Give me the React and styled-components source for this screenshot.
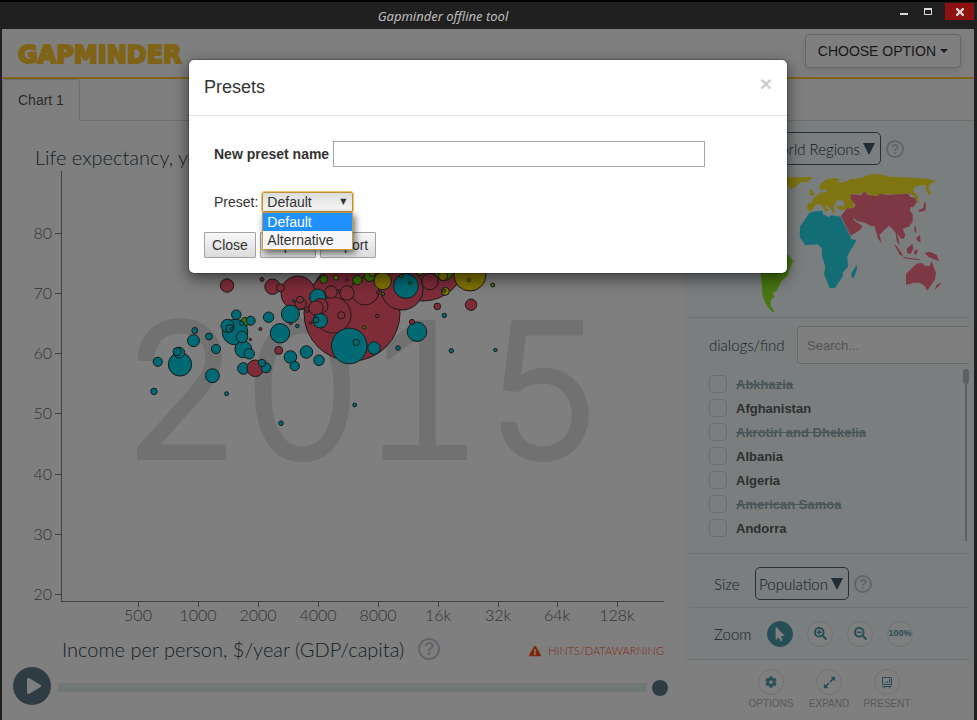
import React from "react";
import styled, { createGlobalStyle } from "styled-components";
import {
  FaMousePointer,
  FaSearchPlus,
  FaSearchMinus,
  FaCog,
  FaExpandAlt,
  FaExclamationTriangle,
  FaPlay,
  FaTimes,
} from "react-icons/fa";

const light = '"Lato", "Open Sans", sans-serif';
const ui = '"Liberation Sans", Arial, sans-serif';

const GlobalStyle = createGlobalStyle`
  *, *::before, *::after { box-sizing: border-box; }
  html, body, #root { height: 100%; margin: 0; }
  body { background: #202020; font-family: ${ui}; font-size: 14px; color: #333; overflow: hidden; }
  button, input, select { font: inherit; color: inherit; }
  button { cursor: pointer; }
`;

const Window = styled.div`
  display: flex;
  flex-direction: column;
  min-height: 100vh;
  border-top: 2px solid #000;
  background: #202020;
`;

const TitleBar = styled.header`
  display: grid;
  grid-template-columns: 1fr auto 1fr;
  height: 27px;
  padding-right: 3px;
`;

const WindowTitle = styled.h1`
  grid-column: 2;
  margin: 0;
  padding-right: 88px;
  font: italic 13px/29px "Noto Sans", sans-serif;
  color: #bebebe;
`;

const WindowButtons = styled.div`
  display: flex;
  justify-content: flex-end;
  align-items: flex-start;
`;

const WindowButton = styled.button`
  display: grid;
  place-items: center;
  width: ${(p) => (p.$danger ? 29 : 24)}px;
  height: 17px;
  margin: 1px ${(p) => (p.$last ? 5 : 0)}px 0 0;
  padding: 0;
  border: 0;
  background: ${(p) => (p.$danger ? "#8f1010" : "transparent")};
  color: #d8d8d8;
`;

const Page = styled.div`
  position: relative;
  flex: 1;
  display: flex;
  flex-direction: column;
  margin: 0 3px 0 2px;
  background: #fff;
`;

const AppHeader = styled.div`
  display: flex;
  justify-content: space-between;
  align-items: flex-start;
  height: 50px;
  padding: 5px 13px 0 15px;
  border-bottom: 2px solid #ffc82f;
`;

const LogoLink = styled.a`
  margin-top: 8px;
  line-height: 0;
`;

const OptionButton = styled.button`
  display: flex;
  align-items: center;
  gap: 4px;
  height: 34px;
  padding: 0 12px;
  border: 1px solid #ccc;
  border-radius: 4px;
  background: #fff;
  box-shadow: 0 3px 6px rgba(0, 0, 0, 0.12);
  &::after {
    content: "";
    border: 4px solid transparent;
    border-top-color: #333;
    border-bottom: 0;
  }
`;

const Tabs = styled.nav`
  display: flex;
  height: 42px;
  border-bottom: 1px solid #ddd;
`;

const Tab = styled.a`
  height: 42px;
  padding: 0 15px;
  border: 1px solid #ddd;
  border-bottom-color: #fff;
  border-radius: 4px 4px 0 0;
  line-height: 40px;
  color: #555;
  background: #fff;
  text-decoration: none;
`;

const Content = styled.div`
  flex: 1;
  display: flex;
`;

const ChartColumn = styled.main`
  flex: 1;
  min-width: 0;
  display: flex;
  flex-direction: column;
`;

const AxisTitle = styled.h2`
  margin: 0;
  font: 300 20px/24px ${light};
  color: #2c4352;
  white-space: nowrap;
`;

const YTitleRow = styled.div`
  height: 49px;
  padding: 24px 0 0 33px;
`;

const Plot = styled.svg`
  display: block;
  width: 100%;
  height: auto;
`;

const XTitleRow = styled.div`
  display: flex;
  align-items: center;
  gap: 14px;
  height: 40px;
  padding: 6px 20px 0 60px;
`;

const Help = styled.button`
  display: grid;
  place-items: center;
  flex: none;
  width: ${(p) => p.$size}px;
  height: ${(p) => p.$size}px;
  padding: 0;
  border: 2px solid #c3c9d2;
  border-radius: 50%;
  background: transparent;
  font: 700 ${(p) => p.$size - 4}px/1 ${ui};
  color: #c3c9d2;
`;

const Hint = styled.button`
  display: flex;
  align-items: center;
  gap: 7px;
  margin-left: auto;
  padding: 4px 0 0;
  border: 0;
  background: transparent;
  font: 300 11px/14px ${light};
  color: #ff4e14;
`;

const Player = styled.div`
  display: flex;
  align-items: center;
  gap: 7px;
  padding: 1px 16px 0 11px;
`;

const PlayButton = styled.button`
  display: grid;
  place-items: center;
  flex: none;
  width: 38px;
  height: 38px;
  padding: 0 0 0 3px;
  border: 0;
  border-radius: 50%;
  background: #5f7889;
  color: #fff;
`;

const TimeSlider = styled.input`
  flex: 1;
  min-width: 0;
  height: 16px;
  margin: 3px 0 0;
  appearance: none;
  background: linear-gradient(#e3edee, #e3edee) left center / calc(100% - 21px) 9px no-repeat;
  border-radius: 5px;
  &::-webkit-slider-thumb {
    appearance: none;
    width: 16px;
    height: 16px;
    border-radius: 50%;
    background: #5f7889;
  }
`;

const SideColumn = styled.aside`
  flex: none;
  width: 290px;
`;

const Panel = styled.div`
  padding: 0 5px 2px;
  background: #f4fdff;
`;

const Section = styled.section`
  border-bottom: 1px solid #dae4e8;
  overflow: hidden;
`;

const ColorSection = styled(Section)`
  height: 197px;
`;

const FieldRow = styled.div`
  display: flex;
  align-items: center;
  gap: 5px;
  height: ${(p) => p.$height}px;
  padding: ${(p) => p.$top || 0}px 0 0 ${(p) => p.$indent}px;
`;

const Label = styled.span`
  min-width: ${(p) => p.$width || 0}px;
  font: 300 15px/20px ${light};
  color: #2f4656;
`;

const PickButton = styled.button`
  display: flex;
  align-items: center;
  justify-content: flex-end;
  gap: 3px;
  width: ${(p) => p.$width}px;
  height: 33px;
  padding: 0 5px;
  border: 1px solid #4a6270;
  border-radius: 5px;
  background: transparent;
  font: 300 15px/20px ${light};
  color: #213848;
  white-space: nowrap;
  &::after {
    content: "";
    border: 6px solid transparent;
    border-top: 12px solid #435a69;
    border-bottom: 0;
  }
`;

const WorldMap = styled.svg`
  display: block;
  width: 100%;
  height: auto;
`;

const FindHead = styled.div`
  display: flex;
  align-items: center;
  justify-content: space-between;
  padding: 8px 0 5px 20px;
`;

const Search = styled.input`
  width: 172px;
  height: 38px;
  padding: 0 9px;
  border: 1px solid #d0d0d0;
  border-right: 0;
  border-radius: 4px 0 0 4px;
  background: #fff;
  font-size: 13px;
  &::placeholder { color: #a8a8a8; }
`;

const FindBody = styled.div`
  display: flex;
  justify-content: space-between;
  height: 184px;
`;

const Countries = styled.ul`
  margin: 0;
  padding: 3px 0 0 20px;
  list-style: none;
`;

const Country = styled.label`
  display: flex;
  align-items: center;
  gap: 9px;
  height: 24px;
  font-weight: 700;
  font-size: 13px;
  color: ${(p) => (p.$off ? "#93abb0" : "#5c5c5c")};
  text-decoration: ${(p) => (p.$off ? "line-through" : "none")};
`;

const Check = styled.input`
  width: 18px;
  height: 18px;
  margin: 0;
  appearance: none;
  border: 1px solid #d4dcde;
  border-radius: 4px;
`;

const ScrollTrack = styled.div`
  width: 6px;
  height: 172px;
  background: linear-gradient(#b6c1ca, #b6c1ca) center / 2px 100% no-repeat;
  &::before {
    content: "";
    display: block;
    height: 15px;
    border-radius: 3px;
    background: #b6c1ca;
  }
`;

const RoundButton = styled.button`
  display: grid;
  place-items: center;
  width: 26px;
  height: 26px;
  padding: 0;
  border: 1px solid ${(p) => (p.$active ? "#4d9caf" : "#d5e4e7")};
  border-radius: 50%;
  background: ${(p) => (p.$active ? "#4d9caf" : "#fff")};
  color: ${(p) => (p.$active ? "#fff" : "#4d9caf")};
  font: 700 9px/1 ${ui};
`;

const RoundRow = styled.div`
  display: flex;
  gap: 14px;
`;

const Actions = styled.div`
  display: flex;
  padding: 7px 0 0 58px;
`;

const Action = styled.label`
  display: flex;
  flex-direction: column;
  align-items: center;
  gap: 1px;
  width: 58px;
  font-size: 10px;
  line-height: 16px;
  color: #a9b5b7;
`;

const Backdrop = styled.div`
  position: absolute;
  inset: 0;
  padding: 30px 16px;
  background: rgba(0, 0, 0, 0.5);
`;

const Dialog = styled.section`
  max-width: 600px;
  margin: 0 auto;
  border: 1px solid rgba(0, 0, 0, 0.2);
  border-radius: 6px;
  background: #fff;
  background-clip: padding-box;
  box-shadow: 0 5px 15px rgba(0, 0, 0, 0.5);
`;

const DialogHead = styled.header`
  display: flex;
  justify-content: space-between;
  align-items: flex-start;
  height: 56px;
  padding: 15px;
  border-bottom: 1px solid #e5e5e5;
`;

const DialogTitle = styled.h3`
  margin: 0;
  font-size: 18px;
  font-weight: 500;
  line-height: 25px;
`;

const DialogClose = styled.button`
  padding: 0;
  border: 0;
  background: transparent;
  font-weight: 700;
  font-size: 21px;
  line-height: 18px;
  color: #ccc;
`;

const DialogBody = styled.div`
  padding: 25px 15px 15px;
`;

const NameRow = styled.div`
  display: flex;
  align-items: center;
  gap: 4px;
  padding: 0 67px 25px 10px;
  label { font-weight: 700; }
`;

const NameInput = styled.input`
  flex: 1;
  min-width: 0;
  height: 26px;
  border: 1px solid #a6a6a6;
  background: #fff;
`;

const PresetRow = styled.div`
  display: flex;
  align-items: center;
  gap: 4px;
  padding: 0 0 20px 10px;
`;

const SelectWrap = styled.div`
  position: relative;
  width: 91px;
  &::after {
    content: "▼";
    position: absolute;
    right: 7px;
    top: 1px;
    font: 8px/18px "DejaVu Sans", sans-serif;
    color: #333;
    pointer-events: none;
  }
`;

const Select = styled.select`
  display: block;
  width: 100%;
  height: 20px;
  padding: 0 4px;
  appearance: none;
  border: 1px solid #c1903c;
  border-radius: 2px;
  outline: 1px solid #efc468;
  background: linear-gradient(#dcdcdc, #f8f8f8);
`;

const Options = styled.ul`
  position: absolute;
  z-index: 1;
  top: 100%;
  left: 0;
  right: 0;
  margin: 0;
  padding: 0;
  list-style: none;
  border: 1px solid #c9983f;
  background: #f7f7f7;
  box-shadow: 2px 3px 7px rgba(0, 0, 0, 0.6);
`;

const Option = styled.li`
  padding-left: 4px;
  line-height: 18px;
  color: ${(p) => (p.$selected ? "#fff" : "#333")};
  background: ${(p) => (p.$selected ? "#1e90ff" : "transparent")};
`;

const DialogButtons = styled.div`
  display: flex;
  gap: 4px;
`;

const PushButton = styled.button`
  min-width: ${(p) => (p.$wide ? 56 : 52)}px;
  height: 26px;
  padding: 0 6px;
  border: 1px solid #a3a3a3;
  border-radius: 1px;
  background: linear-gradient(#f7f7f7, #dcdcdc);
`;

const C = { t: "#00d5e9", r: "#ff5872", g: "#7feb00", y: "#ffe700" };

const bubbles = [
  [423, 258, 43, "r"], [350, 300, 39, "r"], [352, 313, 48, "r"], [402, 289, 21, "r"], [298, 293, 17, "r"],
  [365, 291, 14, "r"], [333, 315, 18, "r"], [347, 293, 7.2, "r"], [331, 292, 6.2, "r"],
  [444, 271, 9.5, "g"], [420, 271, 4.5, "g"], [430, 281.5, 8.2, "r"], [443, 276, 4.5, "y"], [470, 275, 16, "y"],
  [469, 280, 1.6, "y"], [445.3, 291.3, 4, "y"], [444, 290.6, 1.6, "g"], [406, 286, 12.4, "t"], [401, 276, 1.6, "g"],
  [410, 283, 1.4, "g"], [369.7, 276, 5.5, "g"], [372.3, 273.5, 3, "y"], [382.7, 281, 8.7, "y"], [383, 294, 1.6, "g"],
  [378, 292.4, 1.5, "r"], [357.3, 280, 4.7, "g"], [336, 277.5, 2.7, "y"], [323.7, 279.3, 4, "g"], [346.7, 280.4, 1.3, "r"],
  [317.7, 297, 8, "t"], [320.5, 306, 7.5, "r"], [316, 308, 7.2, "r"], [300.6, 303.5, 5.5, "r"], [300, 299.7, 3.4, "r"],
  [320.3, 320.8, 7.2, "t"], [316, 320, 2.8, "t"], [341.2, 315.3, 3.6, "r"], [377.3, 316, 1.8, "r"], [364.3, 327.3, 1.7, "g"],
  [307.3, 311.3, 1.3, "r"], [310.7, 323, 1.3, "r"], [339.3, 291, 1.5, "r"], [349.3, 346, 17.8, "t"], [356.3, 342.4, 3.2, "t"],
  [374, 348, 6.3, "t"], [398, 348, 2.3, "t"], [417, 331.8, 9.7, "t"], [412, 322, 2.6, "r"], [437.3, 306.4, 3.3, "r"],
  [444.3, 315.4, 2.2, "t"], [471, 304.7, 5.7, "r"], [451.3, 350.7, 2.2, "t"], [495.4, 350, 1.7, "t"], [492.7, 285, 2, "g"],
  [227, 285.5, 6.7, "r"], [262, 279.5, 2, "r"], [272.5, 286.7, 7.7, "r"], [280.5, 287.7, 4, "r"], [245, 322, 4.5, "g"],
  [235, 332, 12.8, "t"], [227.5, 325.8, 6.5, "t"], [229.6, 328.5, 3.8, "t"], [231.8, 329, 1.5, "t"], [250.7, 320.7, 4.5, "t"],
  [241.6, 323.3, 2.2, "t"], [236.3, 314.7, 4.8, "t"], [243.3, 349.3, 8.4, "t"], [242, 337, 5.8, "t"], [249.3, 353.8, 5.2, "t"],
  [194.8, 330.5, 3, "t"], [209, 336.5, 3.4, "t"], [193.5, 340.7, 6, "t"], [216, 349, 4.6, "t"], [250.4, 339.5, 1.2, "r"],
  [260.4, 329, 1.5, "r"], [268.6, 317.2, 5.2, "t"], [290.4, 314, 9, "t"], [280, 333.3, 9.7, "t"], [293.5, 301, 1.2, "t"],
  [180, 364.4, 11.7, "t"], [179.2, 352.6, 5.5, "t"], [177, 351.6, 4, "t"], [157.8, 361.8, 4.6, "t"], [154, 391.4, 3.2, "t"],
  [212.4, 375.7, 7, "t"], [226.6, 393.7, 2, "t"], [243.4, 368.5, 5.8, "t"], [255.3, 368.3, 8.3, "r"], [266, 367.8, 5, "t"],
  [262, 363, 3.7, "t"], [278.7, 350.4, 4, "r"], [290.4, 357, 6.3, "t"], [294.7, 366, 4.7, "t"], [281, 423.2, 2.3, "t"],
  [297.3, 326, 1.8, "t"], [290.6, 323.5, 1.2, "r"], [306.4, 352, 6.2, "t"], [319, 360.3, 5.3, "t"], [354.7, 405, 1.9, "t"],
];

const yTicks = [[80, 233], [70, 293], [60, 353], [50, 413], [40, 474], [30, 534], [20, 594]];
const xTicks = [
  ["500", 138], ["1000", 198], ["2000", 258], ["4000", 318], ["8000", 378],
  ["16k", 438], ["32k", 498], ["64k", 557], ["128k", 617],
];

const YearText = styled.text`
  font: 300 187px "Inter", sans-serif;
  font-variant-numeric: tabular-nums;
  fill: #e2e2e2;
  stroke: #e2e2e2;
  stroke-width: 4px;
  stroke-linejoin: round;
`;

function BubbleChart() {
  return (
    <Plot viewBox="2 170 682 456" role="img" aria-label="Bubble chart, 2015">
      <YearText x="363" y="458" textAnchor="middle">2015</YearText>
      <g stroke="#808080" strokeWidth="1" fill="none" shapeRendering="crispEdges">
        <path d="M61.500 171V601.500H664" />
        {yTicks.map(([v, y]) => <path key={v} d={`M55 ${y + 0.5}H61`} />)}
        {xTicks.map(([v, x]) => <path key={v} d={`M${x + 0.5} 602V607`} />)}
      </g>
      <g fontFamily="Lato" fontWeight="300" fontSize="16" fill="#666">
        {yTicks.map(([v, y]) => <text key={v} x="52" y={y + 6} textAnchor="end">{v}</text>)}
        {xTicks.map(([v, x]) => <text key={v} x={x} y="621" textAnchor="middle">{v}</text>)}
      </g>
      <g stroke="#333" strokeWidth="1">
        {bubbles.map(([x, y, r, c], i) => <circle key={i} cx={x} cy={y} r={r} fill={C[c]} />)}
      </g>
    </Plot>
  );
}

function RegionsMap() {
  return (
    <WorldMap viewBox="27 150 840 435" role="img" aria-label="World regions">
      <g opacity="0.85">
        <g fill={C.y}>
          <path d="M300 172L398 171L380 188L365 185L352 195L342 205L330 208L326 195L300 185Z" />
          <path d="M382 272L382 252L398 246L397 238L412 225L424 217L440 217L436 208L428 211L418 206L420 193L440 178L462 174L482 178L470 184L480 188L505 182L512 177L545 174L570 163L600 163L630 170L700 173L740 176L771 184L752 190L745 200L752 222L745 226L737 206L737 195L720 196L702 203L700 215L712 226L716 248L708 245L704 228L685 220L660 224L600 222L590 230L560 222L552 214L545 221L514 222L512 232L520 245L522 262L505 268L480 270L468 262L478 258L495 258L490 242L470 240L465 255L460 262L465 278L460 280L450 265L440 255L436 258L445 272L437 275L425 255L410 253L402 262L395 272Z" />
          <path d="M385 225L392 220L388 212L395 206L400 218L405 222L395 228Z" />
        </g>
        <g fill={C.t}>
          <path d="M388 279L404 274L427 272L429 283L447 292L453 286L482 290L512 352L512 357L530 360L502 408L504 440L488 458L489 468L466 503L449 505L432 462L436 440L425 406L426 385L412 373L376 376L359 350L360 320Z" />
          <path d="M514 460L530 435L531 447L522 472L515 474Z" />
        </g>
        <g fill={C.r}>
          <path d="M483 288L500 266L520 264L527 256L512 236L512 223L545 225L552 213L562 224L590 229L600 221L625 225L685 221L690 230L705 233L710 247L700 262L692 260L690 272L698 283L698 305L686 320L668 326L676 345L672 357L662 355L650 340L655 355L660 378L650 362L647 340L640 330L627 317L606 337L598 345L606 370L595 358L583 318L570 317L555 308L530 303L519 290L523 302L548 318L540 330L512 347Z" />
          <path d="M642 372L652 380L670 408L660 405Z" />
          <path d="M670 411L720 418L718 421L670 415Z" />
          <path d="M680 386L697 371L700 385L692 402L681 398Z" />
          <path d="M703 392L714 388L710 402L703 404Z" />
          <path d="M702 320L706 318L710 335L705 340ZM708 355L720 345L722 368L712 362Z" />
          <path d="M733 398L750 395L770 405L777 423L760 417L745 410Z" />
          <path d="M732 246L738 252L736 272L718 276L716 270L730 264Z" />
          <path d="M678 462L700 440L712 430L728 430L734 437L748 438L755 424L768 460L764 480L742 512L734 498L720 488L702 488L678 495Z" />
          <path d="M785 486L775 500L763 510L770 495Z" />
        </g>
        <path fill={C.g} d="M242 455L242 430L290 400L325 405L340 422L326 455L325 465L305 482L290 512L278 520L284 530L272 540L272 558L285 576L276 575L262 560L248 530Z" />
      </g>
    </WorldMap>
  );
}

function Logo() {
  return (
    <svg width="176" height="26" viewBox="0 0 176 26" role="img" aria-label="Gapminder">
      <text x="1" y="21" fontFamily="DejaVu Sans" fontWeight="700" fontSize="24"
        fill="#ffc82f" stroke="#ffc82f" strokeWidth="2">GAPMINDER</text>
    </svg>
  );
}

function PresentIcon() {
  return (
    <svg width="12" height="13" viewBox="0 0 12 13" fill="none" stroke="currentColor">
      <path d="M1.500 1.500H10.500V8.500H1.500ZM1 10.500H11M4 10.500L3 12.500M8 10.500L9 12.500" />
      <path d="M4.500 7V6M6.500 7V5M8.500 7V3" />
    </svg>
  );
}

const countries = [
  ["Abkhazia", true], ["Afghanistan", false], ["Akrotiri and Dhekelia", true], ["Albania", false],
  ["Algeria", false], ["American Samoa", true], ["Andorra", false],
];

export default function App() {
  return (
    <Window>
      <GlobalStyle />
      <TitleBar>
        <WindowTitle>Gapminder offline tool</WindowTitle>
        <WindowButtons>
          <WindowButton aria-label="Minimize">
            <svg width="8" height="8"><rect y="5" width="8" height="2" fill="currentColor" /></svg>
          </WindowButton>
          <WindowButton aria-label="Maximize" $last>
            <svg width="8" height="8"><path d="M0 0H8V7H0ZM1 2V6H7V2Z" fill="currentColor" fillRule="evenodd" /></svg>
          </WindowButton>
          <WindowButton aria-label="Close window" $danger><FaTimes size={12} /></WindowButton>
        </WindowButtons>
      </TitleBar>
      <Page>
        <AppHeader>
          <LogoLink href="#home"><Logo /></LogoLink>
          <OptionButton>CHOOSE OPTION</OptionButton>
        </AppHeader>
        <Tabs><Tab href="#chart1">Chart 1</Tab></Tabs>
        <Content>
          <ChartColumn>
            <YTitleRow><AxisTitle>Life expectancy, years</AxisTitle></YTitleRow>
            <BubbleChart />
            <XTitleRow>
              <AxisTitle>Income per person, $/year (GDP/capita)</AxisTitle>
              <Help $size={22} aria-label="About income">?</Help>
              <Hint><FaExclamationTriangle size={12} />HINTS/DATAWARNING</Hint>
            </XTitleRow>
            <Player>
              <PlayButton aria-label="Play"><FaPlay size={16} /></PlayButton>
              <TimeSlider type="range" aria-label="Year" min="1800" max="2015" defaultValue="2015" />
            </Player>
          </ChartColumn>
          <SideColumn>
            <Panel>
              <ColorSection>
                <FieldRow $height={49} $top={6} $indent={20}>
                  <Label $width={42}>Color</Label>
                  <PickButton $width={125}>World Regions</PickButton>
                  <Help $size={18} aria-label="About color">?</Help>
                </FieldRow>
                <RegionsMap />
              </ColorSection>
              <Section>
                <FindHead>
                  <Label as="label" htmlFor="find">dialogs/find</Label>
                  <Search id="find" type="search" placeholder="Search..." />
                </FindHead>
                <FindBody>
                  <Countries>
                    {countries.map(([name, off]) => (
                      <li key={name}><Country $off={off}><Check type="checkbox" />{name}</Country></li>
                    ))}
                  </Countries>
                  <ScrollTrack />
                </FindBody>
              </Section>
              <Section>
                <FieldRow $height={53} $top={6} $indent={25}>
                  <Label $width={36}>Size</Label>
                  <PickButton $width={94}>Population</PickButton>
                  <Help $size={18} aria-label="About size">?</Help>
                </FieldRow>
              </Section>
              <Section>
                <FieldRow $height={51} $indent={25}>
                  <Label $width={48}>Zoom</Label>
                  <RoundRow>
                    <RoundButton $active aria-label="Pointer"><FaMousePointer size={14} /></RoundButton>
                    <RoundButton aria-label="Zoom in"><FaSearchPlus size={13} /></RoundButton>
                    <RoundButton aria-label="Zoom out"><FaSearchMinus size={13} /></RoundButton>
                    <RoundButton>100%</RoundButton>
                  </RoundRow>
                </FieldRow>
              </Section>
            </Panel>
            <Actions>
              <Action><RoundButton><FaCog size={12} /></RoundButton>OPTIONS</Action>
              <Action><RoundButton><FaExpandAlt size={13} /></RoundButton>EXPAND</Action>
              <Action><RoundButton><PresentIcon /></RoundButton>PRESENT</Action>
            </Actions>
          </SideColumn>
        </Content>
        <Backdrop>
          <Dialog role="dialog" aria-labelledby="presets-title">
            <DialogHead>
              <DialogTitle id="presets-title">Presets</DialogTitle>
              <DialogClose aria-label="Close dialog">×</DialogClose>
            </DialogHead>
            <DialogBody>
              <NameRow>
                <label htmlFor="preset-name">New preset name</label>
                <NameInput id="preset-name" type="text" />
              </NameRow>
              <PresetRow>
                <label htmlFor="preset">Preset:</label>
                <SelectWrap>
                  <Select id="preset" defaultValue="Default">
                    <option>Default</option>
                    <option>Alternative</option>
                  </Select>
                  <Options>
                    <Option $selected>Default</Option>
                    <Option>Alternative</Option>
                  </Options>
                </SelectWrap>
              </PresetRow>
              <DialogButtons>
                <PushButton>Close</PushButton>
                <PushButton $wide>Import</PushButton>
                <PushButton $wide>Export</PushButton>
              </DialogButtons>
            </DialogBody>
          </Dialog>
        </Backdrop>
      </Page>
    </Window>
  );
}
